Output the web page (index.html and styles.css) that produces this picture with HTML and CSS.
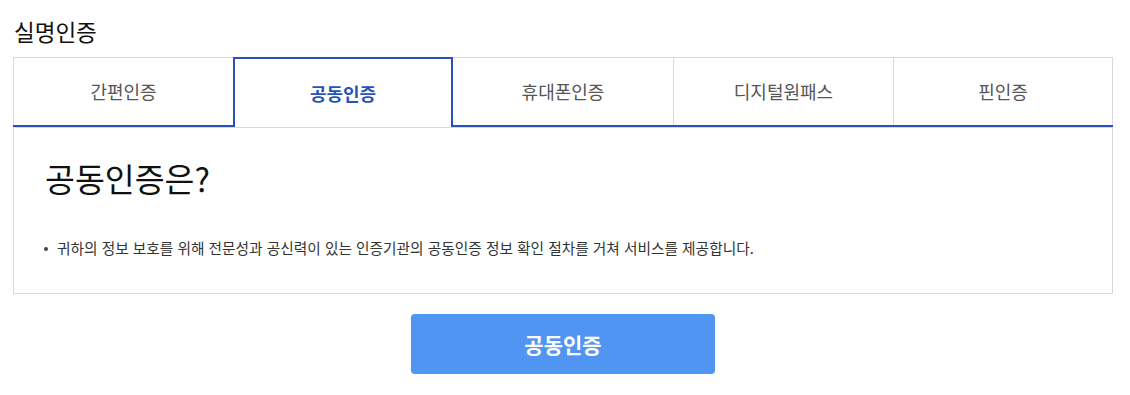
FILE: index.html
```html
<!DOCTYPE html>
<html lang="ko">
<head>
  <meta charset="UTF-8">
  <meta name="viewport" content="width=device-width, initial-scale=1.0">
  <title>실명인증</title>
  <link rel="stylesheet" href="styles.css">
</head>
<body>

<div class="cert-wrap">
  <h2 class="cert-title">실명인증</h2>

  <ul class="cert-tabs">
    <li class="tab">간편인증</li>
    <li class="tab active">공동인증</li>
    <li class="tab">휴대폰인증</li>
    <li class="tab">디지털원패스</li>
    <li class="tab">핀인증</li>
  </ul>

  <div class="cert-panel">
    <h3 class="panel-title">공동인증은?</h3>
    <ul class="panel-list">
      <li>귀하의 정보 보호를 위해 전문성과 공신력이 있는 인증기관의 공동인증 정보 확인 절차를 거쳐 서비스를 제공합니다.</li>
    </ul>
  </div>

  <div class="cert-btns">
    <button class="btn-cert">공동인증</button>
  </div>
</div>

</body>
</html>
```

FILE: styles.css
```css
* {
  box-sizing: border-box;
}
body {
  margin: 0;
  background: #fff;
  font-family: "Noto Sans CJK KR", "Noto Sans", sans-serif;
  color: #111;
}
.cert-wrap {
  width: 1100px;
  margin-left: 13px;
  padding-top: 16px;
}
.cert-title {
  margin: 0 0 11px 1px;
  font-size: 22.5px;
  font-weight: 400;
  line-height: 30px;
  color: #111;
}
.cert-tabs {
  display: grid;
  grid-template-columns: repeat(5, 1fr);
  margin: 0;
  padding: 0;
  list-style: none;
  border-bottom: 2px solid #2653b5;
}
.tab {
  border-top: 1px solid #d9d9d9;
  border-left: 1px solid #d9d9d9;
  line-height: 67px;
  text-align: center;
  font-size: 18px;
  color: #555;
  cursor: pointer;
}
.tab:last-child {
  border-right: 1px solid #d9d9d9;
}
.tab.active {
  position: relative;
  margin-bottom: -2px;
  border: 2px solid #2653b5;
  border-bottom: 0;
  line-height: 68px;
  background: #fff;
  color: #2653b5;
  font-weight: 700;
}
.tab.active + .tab {
  border-left: 0;
}
.cert-panel {
  border: 1px solid #d9d9d9;
  padding: 26px 32px 34px;
}
.panel-title {
  margin: 0 0 35px -1px;
  font-size: 32.5px;
  font-weight: 400;
  line-height: 48px;
  color: #111;
}
.panel-list {
  margin: 0;
  padding: 0;
  list-style: none;
}
.panel-list li {
  position: relative;
  padding-left: 11px;
  font-size: 14.7px;
  line-height: 22px;
  color: #333;
}
.panel-list li::before {
  content: "";
  position: absolute;
  left: -2px;
  top: 10px;
  width: 4px;
  height: 4px;
  border-radius: 50%;
  background: #444;
}
.cert-btns {
  display: flex;
  justify-content: center;
  margin-top: 20px;
}
.btn-cert {
  width: 304px;
  height: 60px;
  border: 0;
  border-radius: 4px;
  background: #4f95f1;
  color: #fff;
  font-family: inherit;
  font-size: 21px;
  font-weight: 700;
  cursor: pointer;
}
```
